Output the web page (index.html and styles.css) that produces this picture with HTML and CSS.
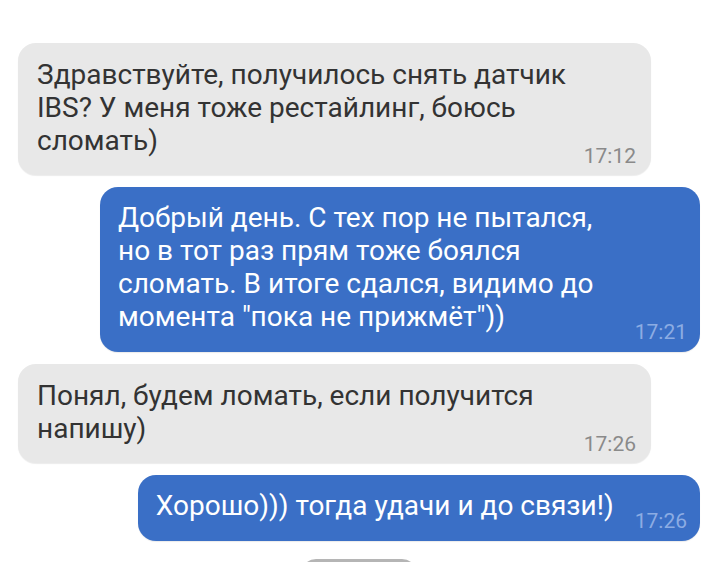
FILE: index.html
```html
<!DOCTYPE html>
<html lang="ru">
<head>
  <meta charset="UTF-8" />
  <meta name="viewport" content="width=device-width, initial-scale=1.0"/>
  <title>Чат</title>
  <link rel="stylesheet" href="styles.css">
</head>
<body>

  <div class="chat">
    <div class="msg in">
      <p class="text">Здравствуйте, получилось снять датчик IBS? У меня тоже рестайлинг, боюсь сломать)</p>
      <span class="time">17:12</span>
    </div>

    <div class="msg out first-out">
      <p class="text">Добрый день. С тех пор не пытался, но в тот раз прям тоже боялся сломать. В итоге сдался, видимо до момента "пока не прижмёт"))</p>
      <span class="time">17:21</span>
    </div>

    <div class="msg in">
      <p class="text">Понял, будем ломать, если получится напишу)</p>
      <span class="time">17:26</span>
    </div>

    <div class="msg out">
      <p class="text">Хорошо))) тогда удачи и до связи!)</p>
      <span class="time">17:26</span>
    </div>

    <!-- start of the next date chip, cut off by the window -->
    <div class="chip"></div>
  </div>

</body>
</html>
```
FILE: styles.css
```css
* {
  box-sizing: border-box;
}

body {
  margin: 0;
  background: #fff;
  font-family: Roboto, "Noto Sans", Arial, sans-serif;
  height: 562px;
  overflow: hidden;
}

.chat {
  display: flex;
  flex-direction: column;
  gap: 12px;
  padding: 43px 20px 0 18px;
}

.msg {
  display: flex;
  align-items: flex-end;
  gap: 21px;
  border-radius: 18px;
  box-shadow: 0 1px 1px rgba(0, 0, 0, 0.08);
}

.msg.in {
  align-self: flex-start;
  width: 633px;
  gap: 10px;
  background: #e8e8e8;
  color: #333;
  padding: 15px 15px 7px 19px;
}

.msg.out {
  align-self: flex-end;
  background: #3a6fc6;
  color: #fff;
  padding: 14px 13px 8px 18px;
}

.msg.first-out {
  width: 600px;
}

.text {
  margin: 0;
  flex: 1;
  font-size: 28px;
  line-height: 33px;
  padding-bottom: 11px;
}

.time {
  font-size: 21px;
  line-height: 24px;
  white-space: nowrap;
}

.in .time {
  color: #8a8a8a;
}

.out .time {
  color: #8cace3;
}

.chip {
  align-self: center;
  width: 116px;
  height: 30px;
  margin-top: 6px;
  border-radius: 15px;
  background: #b5b5b5;
}
```
